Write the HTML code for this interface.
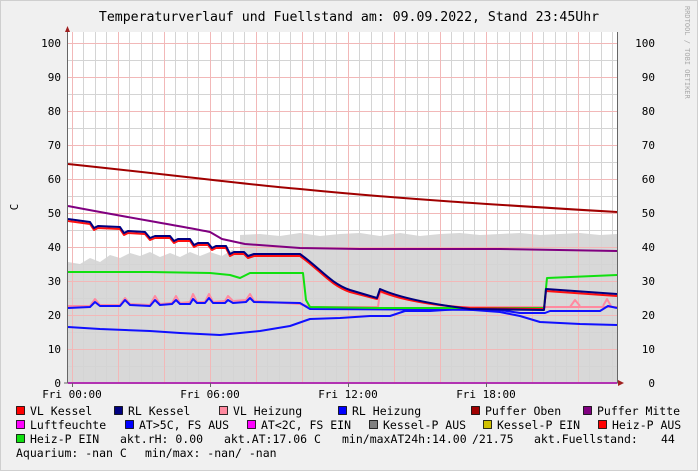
<!DOCTYPE html>
<html><head><meta charset="utf-8"><style>
html,body{margin:0;padding:0;background:#f0f0f0}
svg{display:block}
text{font-family:"DejaVu Sans Mono","Liberation Mono",monospace}
</style></head><body>
<svg width="698" height="471" viewBox="0 0 698 471" xmlns="http://www.w3.org/2000/svg">
<rect x="0" y="0" width="698" height="471" fill="#f0f0f0"/>
<rect x="0.5" y="0.5" width="697" height="470" fill="none" stroke="#cfcfcf"/>
<text x="349" y="21" font-size="13.2" text-anchor="middle" fill="#000">Temperaturverlauf und Fuellstand am: 09.09.2022, Stand 23:45Uhr</text>
<text transform="translate(685,6) rotate(90)" font-size="7" fill="#aaa">RRDTOOL / TOBI OETIKER</text>
<rect x="68" y="32" width="549" height="351" fill="#fff"/>
<polygon fill="#d8d8d8" points="68,383 68,262 80,264 90,258 100,262 110,255 120,258 130,253 140,256 150,252 160,257 170,253 180,257 190,252 200,256 210,252 222,256 232,250 240,252 240,235 260,234 280,236 300,233 320,236 340,234 360,233 380,236 400,233 420,236 440,234 460,233 480,235 500,234 520,233 540,235 560,234 580,233 600,235 617,234 617,383"/>
<g stroke="#d4d4d4" stroke-width="1">
<path d="M68,366.5H617M68,332.5H617M68,298.5H617M68,264.5H617M68,230.5H617M68,196.5H617M68,162.5H617M68,128.5H617M68,94.5H617M68,60.5H617"/>
<path d="M83.5,32V383M95.5,32V383M106.5,32V383M129.5,32V383M141.5,32V383M152.5,32V383M175.5,32V383M187.5,32V383M198.5,32V383M221.5,32V383M233.5,32V383M244.5,32V383M267.5,32V383M279.5,32V383M290.5,32V383M313.5,32V383M325.5,32V383M336.5,32V383M359.5,32V383M371.5,32V383M382.5,32V383M405.5,32V383M417.5,32V383M428.5,32V383M451.5,32V383M463.5,32V383M474.5,32V383M497.5,32V383M509.5,32V383M520.5,32V383M543.5,32V383M555.5,32V383M566.5,32V383M589.5,32V383M601.5,32V383M612.5,32V383"/>
</g>
<g stroke="#f2b8b8" stroke-width="1">
<path d="M68,349.5H617M68,315.5H617M68,281.5H617M68,247.5H617M68,213.5H617M68,179.5H617M68,145.5H617M68,111.5H617M68,77.5H617M68,43.5H617"/>
<path d="M72.5,32V383M118.5,32V383M164.5,32V383M210.5,32V383M256.5,32V383M302.5,32V383M348.5,32V383M394.5,32V383M440.5,32V383M486.5,32V383M532.5,32V383M578.5,32V383"/>
</g>
<g fill="none" stroke-width="2" stroke-linejoin="round">
<path stroke="#a00000" d="M68,164 C200,178 250,185 300,189 C400,199 500,205 617,212"/>
<path stroke="#800080" d="M68,206 C120,216 180,226 210,232 L222,239 L245,244 L300,248 L360,249 L500,249 L617,251"/>
<path stroke="#1010ff" d="M68,327 L100,329 L150,331 L180,333 L220,335 L260,331 L290,326 L310,319 L340,318 L370,316 L390,316 L405,311 L430,311 L460,309 L500,312 L520,316 L540,322 L580,324 L617,325"/>
<path stroke="#ff8aa0" d="M68,306 L90,306 L95,299 L100,305 L120,305 L125,298 L130,304 L150,305 L155,296 L160,304 L172,303 L176,296 L180,303 L190,302 L193,294 L197,302 L205,302 L209,294 L213,302 L225,301 L228,296 L233,301 L246,300 L250,294 L254,301 L300,304 L310,307 L378,307 L380,292 L400,298 L430,304 L460,307 L617,307 M570,307 L575,300 L580,306 M603,306 L607,299 L611,306"/>
<path stroke="#1010ff" d="M68,308 L90,307 L95,302 L100,306 L120,306 L125,300 L130,305 L150,306 L155,300 L160,305 L172,304 L176,300 L180,304 L190,304 L193,299 L197,303 L205,303 L209,298 L213,303 L225,303 L228,300 L233,303 L246,302 L250,298 L254,302 L300,303 L310,309 L500,310 L520,313 L545,313 L550,311 L600,311 L608,306 L617,308"/>
<path stroke="#10e010" d="M68,272 L150,272 L210,273 L230,275 L240,278 L250,273 L303,273 L306,300 L310,307 L380,308 L544,308 L547,278 L617,275"/>
<path stroke="#ff1010" d="M68,221 L90,224 L94,230 L98,228 L120,229 L124,235 L128,233 L145,234 L150,240 L155,238 L170,238 L174,243 L178,241 L190,241 L194,247 L198,245 L208,245 L212,250 L216,248 L226,248 L230,256 L234,254 L244,254 L248,258 L254,256 L300,256 C320,270 330,285 350,292 L377,299 L380,291 C400,300 430,305 470,308 L544,309 L546,291 L617,296"/>
<path stroke="#000080" d="M68,219 L90,222 L94,228 L98,226 L120,227 L124,233 L128,231 L145,232 L150,238 L155,236 L170,236 L174,241 L178,239 L190,239 L194,245 L198,243 L208,243 L212,248 L216,246 L226,246 L230,254 L234,252 L244,252 L248,256 L254,254 L300,254 C320,268 330,283 350,290 L377,298 L380,289 C400,298 430,304 470,309 L544,310 L546,289 L617,294"/>
<path stroke="#ff00ff" d="M68,383 L617,383"/>
</g>
<path d="M67.5,383V30" stroke="#666" stroke-width="1"/>
<path d="M64,383H622" stroke="#666" stroke-width="1"/>
<polygon points="65,32 70,32 67.5,26" fill="#a02020"/>
<polygon points="618,380 618,386 624,383" fill="#a02020"/>
<path d="M72.5,383V387M210.5,383V387M348.5,383V387M486.5,383V387M617.5,32V383" stroke="#666"/>
<g font-size="11" fill="#000" text-anchor="end">
<text x="61" y="47">100</text><text x="61" y="81">90</text><text x="61" y="115">80</text><text x="61" y="149">70</text><text x="61" y="183">60</text><text x="61" y="217">50</text><text x="61" y="251">40</text><text x="61" y="285">30</text><text x="61" y="319">20</text><text x="61" y="353">10</text><text x="61" y="387">0</text>
</g>
<g font-size="11" fill="#000" text-anchor="end">
<text x="655" y="47">100</text><text x="655" y="81">90</text><text x="655" y="115">80</text><text x="655" y="149">70</text><text x="655" y="183">60</text><text x="655" y="217">50</text><text x="655" y="251">40</text><text x="655" y="285">30</text><text x="655" y="319">20</text><text x="655" y="353">10</text><text x="655" y="387">0</text>
</g>
<text transform="translate(18,207) rotate(-90)" font-size="11" text-anchor="middle">C</text>
<g font-size="11" fill="#000" text-anchor="middle">
<text x="72" y="398">Fri 00:00</text><text x="210" y="398">Fri 06:00</text><text x="348" y="398">Fri 12:00</text><text x="486" y="398">Fri 18:00</text>
</g>
<g stroke="#000" stroke-width="0.8">
<rect x="16.5" y="406.5" width="8" height="8" fill="#ff0000"/>
<rect x="114.5" y="406.5" width="8" height="8" fill="#000080"/>
<rect x="219.5" y="406.5" width="8" height="8" fill="#ff8aa0"/>
<rect x="338.5" y="406.5" width="8" height="8" fill="#0000ff"/>
<rect x="471.5" y="406.5" width="8" height="8" fill="#a00000"/>
<rect x="583.5" y="406.5" width="8" height="8" fill="#800080"/>
<rect x="16.5" y="420.5" width="8" height="8" fill="#ff00ff"/>
<rect x="125.5" y="420.5" width="8" height="8" fill="#0000ff"/>
<rect x="247.5" y="420.5" width="8" height="8" fill="#ff00ff"/>
<rect x="369.5" y="420.5" width="8" height="8" fill="#808080"/>
<rect x="483.5" y="420.5" width="8" height="8" fill="#d0c000"/>
<rect x="598.5" y="420.5" width="8" height="8" fill="#ff0000"/>
<rect x="16.5" y="434.5" width="8" height="8" fill="#10e010"/>
</g>
<g font-size="11.5" fill="#000" xml:space="preserve">
<text x="30" y="415">VL Kessel</text>
<text x="128" y="415">RL Kessel</text>
<text x="233" y="415">VL Heizung</text>
<text x="352" y="415">RL Heizung</text>
<text x="485" y="415">Puffer Oben</text>
<text x="597" y="415">Puffer Mitte</text>
<text x="30" y="429">Luftfeuchte</text>
<text x="139" y="429">AT&gt;5C, FS AUS</text>
<text x="261" y="429">AT&lt;2C, FS EIN</text>
<text x="383" y="429">Kessel-P AUS</text>
<text x="497" y="429">Kessel-P EIN</text>
<text x="612" y="429">Heiz-P AUS</text>
<text x="30" y="443">Heiz-P EIN</text>
<text x="120" y="443">akt.rH: 0.00</text>
<text x="224" y="443">akt.AT:17.06 C</text>
<text x="342" y="443">min/maxAT24h:14.00</text>
<text x="472" y="443">/21.75</text>
<text x="534" y="443">akt.Fuellstand:</text>
<text x="661" y="443">44</text>
<text x="16" y="457">Aquarium: -nan C</text>
<text x="145" y="457">min/max: -nan/ -nan</text>
</g>
</svg>
</body></html>
